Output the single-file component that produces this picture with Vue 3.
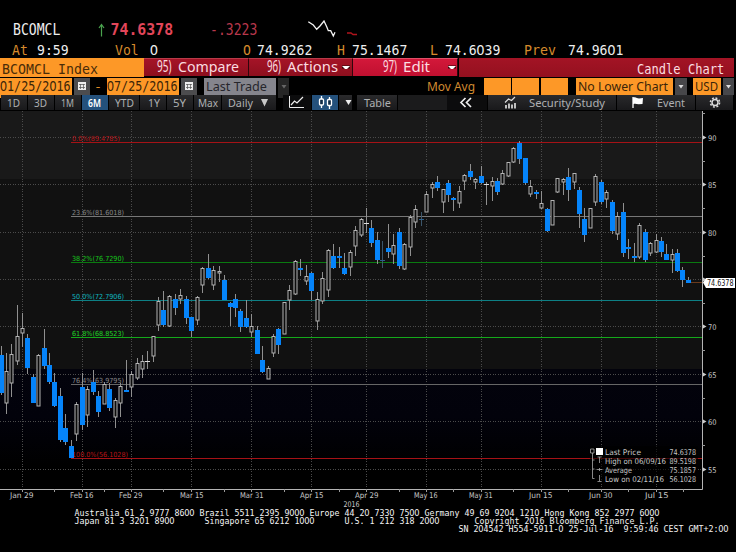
<script setup>
import { h } from 'vue'

const SANS = "'Noto Sans', 'Open Sans', sans-serif"
const MONO = "'DejaVu Sans Mono', 'Liberation Mono', monospace"

// Proportional terminal text fitted to a given width.
const Fit = (p) =>
  h('svg', { width: p.w, height: p.h, style: { display: 'block', overflow: 'visible' } }, [
    h('text', {
      x: p.x, y: p.y, textLength: p.len, lengthAdjust: 'spacingAndGlyphs',
      'font-size': p.size, 'font-family': p.font || SANS, 'font-weight': p.bold ? 600 : 400, fill: p.fill
    }, p.t)
  ])
Fit.props = { t: String, w: null, h: null, x: null, y: null, len: null, size: null, fill: String, bold: Boolean, font: String }

// Fixed pitch terminal text; zeros are drawn without the inner mark.
const Cells = (p) => {
  const sx = p.pitch / (p.size * 0.602)
  const xs = Array.from(p.t, (_, i) => ((+p.x + (i + 0.5) * p.pitch) / sx).toFixed(2)).join(' ')
  return h('svg', { width: p.w, height: p.h, style: { display: 'block', overflow: 'visible' } }, [
    h('text', {
      x: xs, y: p.y, transform: `scale(${sx.toFixed(4)} 1)`, 'text-anchor': 'middle',
      'font-size': p.size, 'font-family': MONO, 'font-weight': p.bold ? 700 : 400, fill: p.fill
    }, p.t.replace(/ {2}/g, '\u00a0\u00a0').split(/(0)/).filter(Boolean).map((s) =>
      s === '0' ? h('tspan', { 'font-family': "'DejaVu Sans', sans-serif" }, s) : h('tspan', s)))
  ])
}
Cells.props = { t: String, w: null, h: null, x: null, y: null, pitch: Number, size: null, fill: String, bold: Boolean }

const periods = [
  ['1D', 27, 6, 13], ['3D', 27, 6, 13], ['1M', 27, 6, 13], ['6M', 27, 6, 13], ['YTD', 31, 6, 19],
  ['1Y', 27, 8, 12], ['5Y', 27, 6, 13], ['Max', 28, 4, 20]
]

// x, wick top, body top, body bottom, wick bottom, kind (0 down, 1 up, 2 cross, 3 faint cross)
const candles = [
  [1,346,355,393,395,0],[6,353,371,403,414,1],[11,344,354,383,397,1],[17,305,336,361,365,1],[22,313,328,333,347,1],
  [27.5,334,338,368,374,0],[33,374,377,403,403,0],[38.5,354,355,406,406,1],[44,329,348,366,369,0],[49.5,353,365,382,384,0],
  [54.5,373,382,406,407,0],[60.5,388,396,440,442,0],[65.5,414,428,442,445,0],[71.5,440,446,458,458,0],[76.5,402,404,434,441,1],
  [82,373,387,425,430,0],[87.5,386,389,415,427,1],[93,370,382,392,395,0],[98.5,391,396,412,417,0],[104,382,384,404,404,1],
  [109,383,389,408,411,0],[115,398,400,417,428,1],[120,383,386,403,417,1],[126,360,390,392,392,0],[131,371,374,387,397,1],
  [137,358,363,378,380,1],[142,355,361,369,378,1],[147.5,351,361,362,369,2],[153,336,336,356,362,1],[158.5,297,301,325,331,1],
  [163.5,291,310,325,327,0],[169.5,295,296,326,327,1],[175.5,294,299,308,315,0],[180.5,289,295,299,304,1],[186,296,299,318,324,0],
  [191.5,317,317,331,337,0],[197.5,296,297,320,325,1],[202.5,267,268,285,293,1],[208,254,268,278,279,0],[213.5,266,270,285,290,1],
  [219,266,271,273,282,1],[224.5,275,280,300,300,0],[230,302,303,307,326,0],[235.5,294,299,308,317,0],[240.5,309,311,327,332,0],
  [246,300,318,327,328,0],[251.5,314,326,332,337,1],[257,326,330,354,354,0],[262.5,346,360,372,373,0],[268,366,368,379,379,1],
  [273.5,334,336,353,357,1],[278.5,328,329,345,354,0],[284.5,302,302,334,334,1],[289.5,285,290,300,310,1],[295.5,260,261,294,295,1],
  [300.5,259,268,270,276,0],[306,265,276,281,285,1],[311.5,272,273,291,300,0],[317.5,292,299,321,330,1],[322.5,272,278,301,304,1],
  [328,249,250,290,297,1],[333.5,244,256,268,269,0],[339,247,256,258,268,0],[344.5,253,268,274,275,0],[350,250,252,267,276,1],
  [355.5,226,230,246,256,1],[361,218,219,235,237,1],[366.5,208,223,224,233,2],[371.5,220,228,243,247,0],[377.5,232,240,260,264,0],
  [382.5,241,260,261,268,3],[388.5,224,248,252,258,0],[393.5,234,245,254,264,1],[399.5,228,232,266,269,0],[404.5,243,244,269,270,1],
  [410,215,217,247,256,1],[415.5,205,209,222,228,1],[421,212,219,220,226,3],[426.5,191,194,212,212,1],[432,182,184,188,198,1],
  [437.5,176,182,188,191,0],[443,189,189,202,213,1],[448.5,180,183,195,202,0],[453.5,197,198,200,211,0],[459,186,191,203,208,1],
  [464.5,174,175,181,190,1],[470,164,171,177,180,0],[475.5,178,179,182,189,1],[481,166,176,183,184,0],[486.5,182,184,185,205,2],
  [492,177,181,186,201,1],[497.5,178,181,192,195,0],[502.5,170,173,184,185,1],[508.5,162,162,176,177,1],[513.5,147,148,162,163,1],
  [519.5,141,143,159,164,0],[525,158,158,183,185,0],[530.5,180,186,194,197,1],[536,190,192,194,199,0],[541,191,203,208,209,1],
  [547,208,209,231,232,0],[552,200,200,225,225,1],[557.5,178,178,192,193,1],[563,178,179,182,195,1],[568.5,168,177,190,201,0],
  [574,173,173,182,189,1],[579.5,187,190,214,228,0],[584.5,208,219,235,242,0],[590.5,208,208,228,228,1],[595.5,174,176,202,206,1],
  [601.5,180,182,202,204,0],[606.5,190,192,199,208,1],[612,200,202,231,234,0],[617.5,212,216,234,240,1],[623.5,203,212,253,257,0],
  [628.5,239,247,249,259,0],[634,243,256,258,262,0],[639.5,223,225,257,259,1],[645,229,232,260,262,0],[650.5,242,243,253,256,1],
  [656,234,240,252,253,1],[661.5,237,241,252,257,0],[666.5,244,254,260,260,0],[672,249,254,260,273,1],[677.5,249,253,271,272,0],
  [682.5,267,270,280,287,0],[688.5,277,280,283,283,0]
].map(([x, ...r]) => [Math.floor(x), ...r])

const vGrid = [
  [22, 'Jan 29', 10], [82, 'Feb 16', 70], [131, 'Feb 29', 119], [191, 'Mar 15', 180], [251, 'Mar 31', 240], [311, 'Apr 15', 300],
  [366, 'Apr 29', 355], [426, 'May 16', 414], [481, 'May 31', 469], [541, 'Jun 15', 529], [601, 'Jun 30', 589], [656, 'Jul 15', 645]
]
const xMinor = [54, 104, 163, 224, 284, 339, 399, 453, 513, 568, 628, 683]
const hGrid = [[137, '90'], [184, '85'], [232, '80'], [279, ''], [326, '70'], [374, '65'], [421, '60'], [469, '55']]
const yMinor = [113, 161, 208, 256, 303, 350, 398, 445]
const fibs = [
  [142, '0.0%(89.4785)', '#a51216', 48, '#b81418'], [216, '23.6%(81.6018)', '#777', 52, '#888'], [262, '38.2%(76.7290)', '#0a7a10', 52, '#16c81c'],
  [300, '50.0%(72.7906)', '#0d8085', 52, '#10b8c0'], [337, '61.8%(68.8523)', '#14a81a', 52, '#20d828'],
  [384, '76.4%(63.9795)', '#666', 52, '#888'], [458, '100.0%(56.1028)', '#a51216', 56, '#b81418']
]
const legend = [
  ['Last Price', 36, '74.6378'], ['High on 06/09/16', 61, '89.5198'],
  ['Average', 27, '75.1857'], ['Low on 02/11/16', 59, '56.1028']
]
</script>

<template>
  <main class="screen">
    <header class="quote">
      <div class="quote-row">
        <Cells t="BCOMCL" w="98" h="19" x="13" y="15.500" :pitch="7.9" size="15.500" fill="#eee" />
        <svg width="12" height="19"><path d="M3.500 16.500V5M1 8l2.500-3.500L6 8" fill="none" stroke="#4aa34e" stroke-width="1.200" /></svg>
        <Cells t="74.6378" w="99" h="19" x="0.500" y="15" :pitch="8.950" size="15" fill="#e2465a" bold />
        <Cells t="-.3223" w="95" h="19" x="1" y="15.500" :pitch="7.9" size="15" fill="#b8384c" />
        <svg width="60" height="19">
          <path d="M4.300 1.700L9.300 5l3.400 4.300L16 6l4-5 2.700 5.700 1.600 4 2.400 0 2.600 5.300 1.700-3.700" fill="none" stroke="#f4f4f4" stroke-width="1.300" />
          <path d="M43 13h4l2 1.500h4" fill="none" stroke="#b0141c" stroke-width="1.300" />
        </svg>
      </div>
      <div class="quote-row">
        <Cells t="At" w="37" h="19" x="12" y="16" :pitch="7.9" size="14.200" fill="#d68a2c" />
        <Cells t="9:59" w="66" h="19" x="0" y="16" :pitch="7.9" size="14.200" fill="#eee" />
        <Cells t="Vol" w="35" h="19" x="12" y="16" :pitch="7.9" size="14.200" fill="#d68a2c" />
        <Cells t="0" w="93" h="19" x="12" y="16" :pitch="7.9" size="14.200" fill="#eee" />
        <Cells t="O" w="14" h="19" x="12" y="16" :pitch="7.9" size="14.200" fill="#d68a2c" />
        <Cells t="74.9262" w="80" h="19" x="12" y="16" :pitch="7.9" size="14.200" fill="#eee" />
        <Cells t="H" w="15" h="19" x="12" y="16" :pitch="7.9" size="14.200" fill="#d68a2c" />
        <Cells t="75.1467" w="78" h="19" x="12" y="16" :pitch="7.9" size="14.200" fill="#eee" />
        <Cells t="L" w="15" h="19" x="12" y="16" :pitch="7.9" size="14.200" fill="#d68a2c" />
        <Cells t="74.6039" w="80" h="19" x="12" y="16" :pitch="7.9" size="14.200" fill="#eee" />
        <Cells t="Prev" w="43" h="19" x="11" y="16" :pitch="8" size="14.200" fill="#d68a2c" />
        <Cells t="74.9601" w="80" h="19" x="12" y="16" :pitch="7.9" size="14.200" fill="#eee" />
      </div>
    </header>

    <nav class="titles">
      <div class="amber"><Cells t="BCOMCL Index" w="144" h="19" x="2" y="16" :pitch="8" size="14.500" fill="#4a2c08" /></div>
      <div class="action">
        <Fit t="95)" w="30" h="17" x="13" y="12.700" len="14.500" size="15.500" fill="#fbdde0" />
        <Fit t="Compare" w="70" h="17" x="4" y="12.700" len="61" size="14.500" fill="#fbdde0" />
      </div>
      <div class="action">
        <Fit t="96)" w="34" h="17" x="18" y="12.700" len="14" size="15.500" fill="#fbdde0" />
        <Fit t="Actions" w="59" h="17" x="4" y="12.700" len="51" size="14.500" fill="#fbdde0" />
        <svg width="9" height="17"><path d="M0 6.500h8v3H0z" fill="#300508" /><path d="M0 7h8L5 10H3z" fill="#fff" /></svg>
      </div>
      <div class="action bright">
        <Fit t="97)" w="47" h="17" x="30" y="12.700" len="14" size="15.500" fill="#fbdde0" />
        <Fit t="Edit" w="48" h="17" x="3" y="12.700" len="27" size="14.500" fill="#fbdde0" />
        <svg width="9" height="17"><path d="M0 6.500h8v3H0z" fill="#300508" /><path d="M0 7h8L5 10H3z" fill="#fff" /></svg>
      </div>
      <div class="red"><Cells t="Candle Chart" w="275" h="19" x="178" y="16" :pitch="7.270" size="14.500" fill="#fbdde0" /></div>
    </nav>

    <section class="fields">
      <div class="amber"><Cells t="01/25/2016" w="72" h="16" x="0" y="13" :pitch="7.050" size="13.500" fill="#3a2408" /></div>
      <i></i>
      <div class="btn"><svg width="16" height="16"><path d="M4 4h8v8H4z" fill="#eee" /><path d="M5 6.500h6M5 9.500h6M6.500 6v5M9.500 6v5" stroke="#555" stroke-width=".7" /></svg></div>
      <div><Cells t="-" w="17" h="16" x="4" y="13" :pitch="8" size="13" fill="#e08c28" /></div>
      <div class="amber"><Cells t="07/25/2016" w="72" h="16" x="0" y="13" :pitch="7.050" size="13.500" fill="#3a2408" /></div>
      <i></i>
      <div class="btn"><svg width="16" height="16"><path d="M4 4h8v8H4z" fill="#eee" /><path d="M5 6.500h6M5 9.500h6M6.500 6v5M9.500 6v5" stroke="#555" stroke-width=".7" /></svg></div>
      <i></i>
      <div class="grey"><Fit t="Last Trade" w="73" h="16" x="2" y="13" len="61" size="13" fill="#26262c" /></div>
      <i></i>
      <div class="drop dim"><svg width="12" height="16"><path d="M3.500 7h5L6 10.500z" fill="#666" /></svg></div>
      <div><Fit t="Mov Avg" w="194" h="16" x="138" y="13" len="48" size="13" fill="#d08a30" /></div>
      <div class="amber"></div><i></i>
      <div class="amber"></div><i></i>
      <div class="amber"></div><i></i>
      <div class="amber"><Fit t="No Lower Chart" w="97" h="16" x="2" y="13" len="90" size="13" fill="#3a2408" /></div>
      <i></i>
      <div class="drop"><svg width="12" height="16"><path d="M3.500 7h5L6 10.500z" fill="#ddd" /></svg></div>
      <i></i>
      <div class="amber"><Fit t="USD" w="28" h="16" x="2" y="13" len="23" size="13" fill="#3a2408" /></div>
      <i></i>
      <div class="drop"><svg width="12" height="16"><path d="M3 7h5L5.500 10.500z" fill="#ddd" /></svg></div>
    </section>

    <section class="toolbar">
      <div v-for="p in periods" :key="p[0]" class="tool" :class="{ on: p[0] === '6M' }">
        <Fit :t="p[0]" :w="p[1] - 1" h="15" :x="p[2]" y="12" :len="p[3]" size="11.500" :fill="p[0] === '6M' ? '#fff' : '#aeb0b2'" :bold="p[0] === '6M'" />
      </div>
      <div class="tool">
        <Fit t="Daily" w="38" h="15" x="6" y="12" len="25" size="11.500" fill="#aeb0b2" />
        <svg width="14" height="15"><path d="M1 4h7L4.500 11.500z" fill="#c8c8c8" /></svg>
      </div>
      <i></i>
      <div class="tool black"><svg width="28" height="15"><path d="M6.500 1v11.500H21" stroke="#eee" fill="none" /><path d="M8 10l3.500-4 2.500 2 6-6" stroke="#eee" fill="none" stroke-width="1.200" /></svg></div>
      <div class="tool on"><svg width="26" height="15"><path d="M9.500 1v12M17.500 2v12" stroke="#fff" stroke-width="1.300" /><rect x="7.500" y="4" width="4" height="6" rx="1" fill="#112b46" stroke="#fff" stroke-width="1.300" /><rect x="15.500" y="4.500" width="4" height="6" rx="1" fill="#112b46" stroke="#fff" stroke-width="1.300" /></svg></div>
      <div class="tool"><svg width="13" height="15"><path d="M6.500 5h6l-3 5z" fill="#eee" /></svg></div>
      <i></i>
      <div class="tool"><Fit t="Table" w="39" h="15" x="7" y="12" len="27" size="11.500" fill="#aeb0b2" /></div>
      <i class="filler"></i>
      <div class="tool black"><svg width="38" height="15"><path d="M18.500 3l-4.500 4.500L18.500 12M24 3l-4.500 4.500L24 12" stroke="#eee" fill="none" stroke-width="1.700" /></svg></div>
      <div class="tool">
        <svg width="41" height="15"><path d="M17 7.500l3.500-3.500 3 1.500L27 2" stroke="#ddd" fill="none" stroke-width="1.200" /><path d="M18 10v3.500M21 8.500v5M24 9.500v4M27 8v5.500" stroke="#ddd" stroke-width="1.700" /></svg>
        <Fit t="Security/Study" w="86" h="15" x="0" y="12" len="76" size="11.500" fill="#aeb0b2" />
      </div>
      <div class="tool">
        <svg width="39" height="15"><path d="M16 2v11" stroke="#fff" stroke-width="1.300" /><path d="M16 2.500c3-1 4 1 6 1l4-.5-.5 6-4 .3c-2 0-3-1-5.500 0z" fill="#fff" /></svg>
        <Fit t="Event" w="38" h="15" x="1" y="12" len="28" size="11.500" fill="#aeb0b2" />
      </div>
      <div class="tool"><svg width="38" height="15"><circle cx="19" cy="7.500" r="3" fill="none" stroke="#ddd" stroke-width="1.500" /><circle cx="19" cy="7.500" r="4.600" fill="none" stroke="#ddd" stroke-width="1.500" stroke-dasharray="1.900 1.710" /></svg></div>
    </section>

    <svg class="chart" width="736" height="398" viewBox="0 110 736 398">
      <defs>
        <linearGradient id="deep" x1="0" y1="0" x2="0" y2="1">
          <stop offset="0" stop-color="#03030c" /><stop offset=".4" stop-color="#02020b" /><stop offset=".8" stop-color="#000" />
        </linearGradient>
      </defs>
      <rect x="0" y="111" width="702" height="68" fill="#191919" />
      <rect x="0" y="179" width="702" height="190" fill="#111" />
      <rect x="0" y="369" width="702" height="120" fill="url(#deep)" />
      <g stroke="#4b4b4b" stroke-dasharray="1 1.500" shape-rendering="crispEdges">
        <path v-for="g in vGrid" :key="g[0]" :d="`M${g[0] + 0.5} 111V489`" />
        <path v-for="g in hGrid" :key="g[0]" :d="`M0 ${g[0] + 0.5}H702`" />
      </g>
      <g v-for="f in fibs" :key="f[0]">
        <path :d="`M71 ${f[0] + 0.5}H702`" :stroke="f[2]" />
        <text x="72" :y="f[0] - 1.300" :textLength="f[3]" lengthAdjust="spacingAndGlyphs" :fill="f[4]" class="fib">{{ f[1] }}</text>
      </g>
      <path d="M690 282.500H704" stroke="#6b3a1c" />
      <g v-for="c in candles" :key="c[0]">
        <path :d="`M${c[0] + 0.5} ${c[1]}V${c[4]}`" :stroke="c[5] === 3 ? '#3c566a' : '#909090'" />
        <rect v-if="c[5] === 0" :x="c[0] - 2" :y="c[2]" width="5" :height="c[3] - c[2]" fill="#0584fa" />
        <rect v-else-if="c[5] === 1" :x="c[0] - 1" :y="c[2] + 0.5" width="3" :height="Math.max(1, c[3] - c[2] - 0.5)" fill="#0c0c0c" stroke="#b4b4b4" />
        <path v-else :d="`M${c[0] - 2} ${c[2] + 0.5}h5`" :stroke="c[5] === 3 ? '#2c5f8c' : '#ddd'" />
      </g>

      <path d="M702.500 111V489.500H0" fill="none" stroke="#b4b4b4" />
      <g stroke="#999">
        <path v-for="x in xMinor" :key="x" :d="`M${x + 0.5} 489v3`" />
        <path v-for="g in vGrid" :key="g[0]" :d="`M${g[0] + 0.5} 489v3`" />
        <path v-for="y in yMinor" :key="y" :d="`M702 ${y + 0.5}h3`" />
      </g>
      <g v-for="g in hGrid" :key="g[0]">
        <path :d="`M703 ${g[0] - 1.5}l3.500 2l-3.500 2z`" fill="#ccc" />
        <text v-if="g[1]" x="708" :y="g[0] + 3.500" textLength="8.500" lengthAdjust="spacingAndGlyphs" class="axis">{{ g[1] }}</text>
      </g>
      <text v-for="g in vGrid" :key="g[1]" :x="g[2]" y="498" textLength="23.500" lengthAdjust="spacingAndGlyphs" class="axis">{{ g[1] }}</text>
      <text x="343.500" y="507" textLength="16" lengthAdjust="spacingAndGlyphs" class="axis">2016</text>

      <path d="M703 282.500l3-4.500h29v10h-29z" fill="#fff" />
      <text x="707" y="286" textLength="26.500" lengthAdjust="spacingAndGlyphs" class="tag">74.6378</text>

      <rect x="590" y="446" width="108" height="37" fill="#000" opacity=".6" />
      <g fill="none" stroke="#aaa" stroke-width=".8">
        <path d="M590.500 449h3.500v4h-3.500zM592.500 453v25.500h2M592.500 460h2M592.500 469h2" />
        <path d="M597.500 457h4M599.500 457v6M596.500 469.500h6M599.500 468v3M599.500 475v6M597.500 481.500h4" />
      </g>
      <rect x="596" y="448" width="7" height="7" fill="#fff" />
      <g v-for="(l, i) in legend" :key="l[0]">
        <text x="605" :y="454.500 + i * 9.200" :textLength="l[1]" lengthAdjust="spacingAndGlyphs" class="axis">{{ l[0] }}</text>
        <text x="669.500" :y="454.500 + i * 9.200" textLength="26.500" lengthAdjust="spacingAndGlyphs" class="axis">{{ l[2] }}</text>
      </g>
    </svg>

    <footer class="footer">
      <Cells t="Australia 61 2 9777 8600 Brazil 5511 2395 9000 Europe 44 20 7330 7500 Germany 49 69 9204 1210 Hong Kong 852 2977 6000" w="736" h="8" x="74.500" y="7.700" :pitch="5" size="8" fill="#f4f4f4" />
      <Cells t="Japan 81 3 3201 8900      Singapore 65 6212 1000      U.S. 1 212 318 2000       Copyright 2016 Bloomberg Finance L.P." w="736" h="8" x="74.500" y="7.700" :pitch="5" size="8" fill="#f4f4f4" />
      <Cells t="SN 204542 H554-5911-0 25-Jul-16  9:59:46 CEST GMT+2:00" w="736" h="8" x="458.500" y="7.700" :pitch="5" size="8" fill="#f4f4f4" />
    </footer>
  </main>
</template>

<style>
body { background: #000; overflow: hidden; }
</style>

<style scoped>
.screen { width: 736px; height: 552px; background: #000; display: flex; flex-direction: column; overflow: hidden; }
.quote { height: 58px; padding-top: 20px; box-sizing: border-box; }
.quote-row { display: flex; height: 19px; }
.quote-row > svg { flex: none; }
.titles { display: grid; grid-template-columns: 144px 105px 104px 105px 1px 275px; height: 19px; margin-bottom: 1px; }
.titles .red { grid-column: 6; background: linear-gradient(#a31425, #94101f); }
.amber { background: #fd9827; }
.action { display: flex; box-sizing: border-box; height: 18px; border-right: 1px solid #30060c; border-top: 1px solid #b93a48; background: linear-gradient(#a51427, #8d0f1e); }
.action.bright { background: linear-gradient(#d3183a, #c01030); border-top-color: #e05068; }
.fields { display: grid; height: 16px; margin-bottom: 1px; grid-template-columns: 72px 2px 16px 17px 72px 2px 16px 7px 72px 2px 11px 195px 27px 1px 27px 2px 27px 8px 97px 2px 12px 6px 28px 2px 11px; }
.fields > * { min-width: 0; }
.btn { background: #4c4c4e; }
.grey { background: #85858d; }
.drop { background: #47474a; }
.drop.dim { background: #262626; }
.toolbar { display: grid; height: 15px; padding-left: 1px; grid-template-columns: 27px 27px 27px 27px 31px 27px 27px 28px 55px 6px 29px 27px 14px 4px 41px 49px 41px 129px 79px 38px; }
.tool { display: flex; box-sizing: border-box; border-right: 1px solid #000; background: linear-gradient(#2a2a2c, #19191b); }
.tool.on { background: #24517c; }
.tool.black { background: #0c0c0d; }
.toolbar .filler { background: #1b1b1c; }
.chart { display: block; flex: none; }
.fib { font: 7px 'DejaVu Sans', sans-serif; }
.axis { font: 7.800px 'DejaVu Sans', sans-serif; fill: #c8c8c8; }
.tag { font: 8px 'DejaVu Sans', sans-serif; fill: #111; }
.footer { display: flex; flex-direction: column; }
</style>
